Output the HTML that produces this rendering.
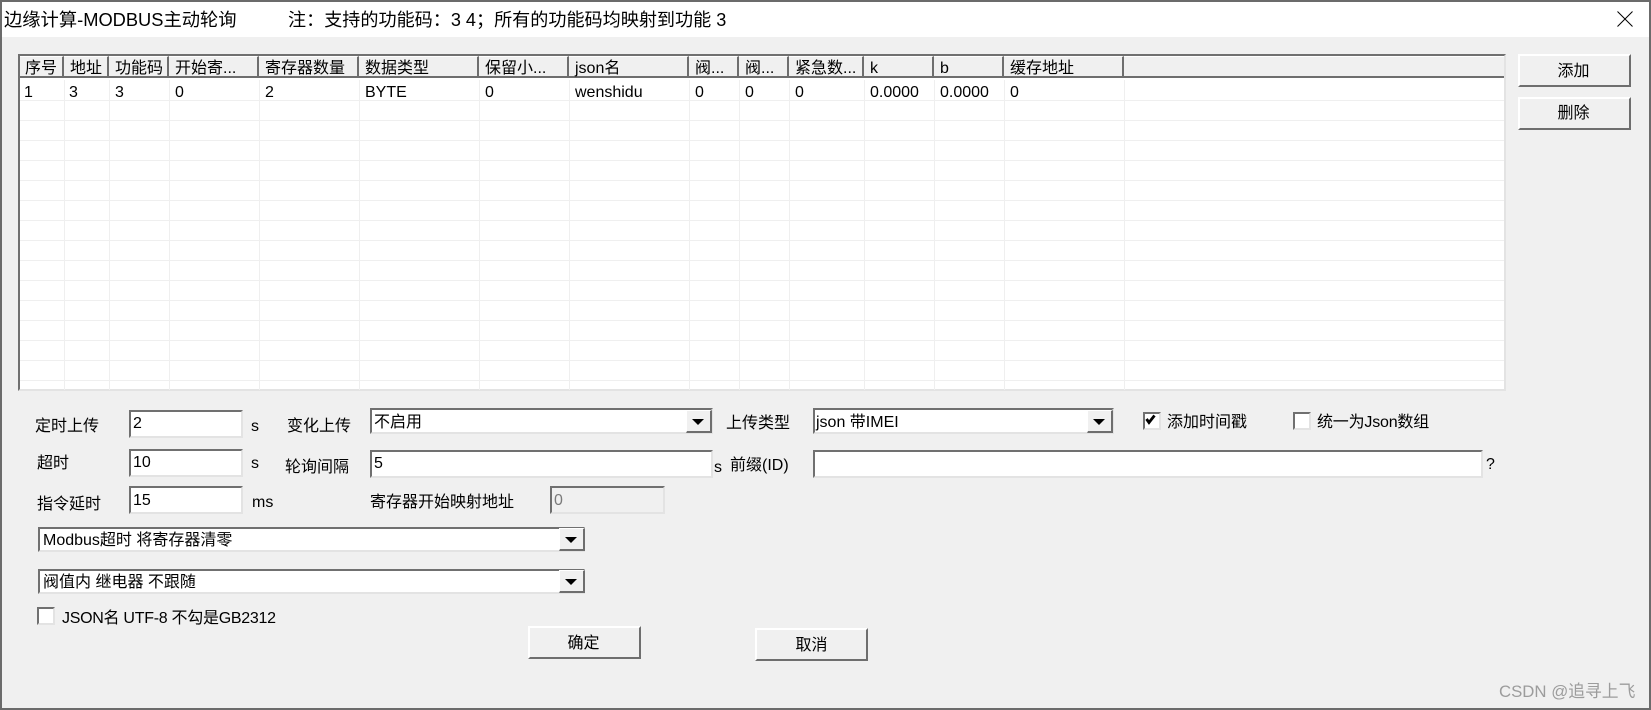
<!DOCTYPE html>
<html lang="zh">
<head>
<meta charset="utf-8">
<title>边缘计算-MODBUS主动轮询</title>
<style>
html,body{margin:0;padding:0;width:1651px;height:710px;overflow:hidden;background:#f0f0f0}
body{position:relative;font-family:"Liberation Sans","WenQuanYi Zen Hei","Noto Sans CJK SC",sans-serif;font-size:16px;color:#000}
div{position:absolute;box-sizing:border-box}
.t{white-space:nowrap;line-height:20px;height:20px;margin-top:2px}
.ttl{font-size:18.3px;line-height:24px;height:24px;white-space:nowrap}
.sunk{background:#fff;border-top:2px solid #707070;border-left:2px solid #707070;border-right:2px solid #e3e3e3;border-bottom:2px solid #e3e3e3}
.btn{background:#f0f0f0;border-top:2px solid #fff;border-left:2px solid #fff;border-right:2px solid #6e6e6e;border-bottom:2px solid #6e6e6e;text-align:center;line-height:31px;outline:0}
.ab{background:#f0f0f0;border-top:1px solid #fff;border-left:1px solid #fff;border-right:2px solid #6e6e6e;border-bottom:2px solid #6e6e6e}
.ar{width:0;height:0;border-left:6px solid transparent;border-right:6px solid transparent;border-top:6px solid #000}
.hd{top:56px;height:22px;background:#f0f0f0;border-right:2px solid #6e6e6e;border-top:1px solid #fff;border-bottom:2px solid #6e6e6e}
.hl{top:59px;white-space:nowrap;line-height:20px;height:20px}
.cl{top:80px;width:1px;height:310px;background:#efefef}
.rl{left:20px;width:1484px;height:1px;background:#efefef}
.c{top:83px;white-space:nowrap;line-height:20px;height:20px}
</style>
</head>
<body>
<div style="left:0;top:0;width:1651px;height:37px;background:#fff"></div>
<div style="left:0;top:0;width:1651px;height:2px;background:#6b6b6b"></div>
<div style="left:0;top:708px;width:1651px;height:2px;background:#6b6b6b"></div>
<div style="left:0;top:0;width:2px;height:710px;background:#6b6b6b"></div>
<div style="left:1649px;top:0;width:2px;height:710px;background:#6b6b6b"></div>

<div class="ttl" style="left:4px;top:8px">边缘计算-MODBUS主动轮询</div>
<div class="ttl" style="left:288px;top:8px;font-size:18.1px">注：支持的功能码：3 4；所有的功能码均映射到功能 3</div>
<svg style="position:absolute;left:1617px;top:11px" width="16" height="16" viewBox="0 0 16 16"><path d="M0.5 0.5L15.5 15.5M15.5 0.5L0.5 15.5" stroke="#000" stroke-width="1" fill="none"/></svg>

<!-- grid -->
<div class="sunk" style="left:18px;top:54px;width:1488px;height:337px"></div>
<div class="rl" style="top:100px"></div><div class="rl" style="top:120px"></div><div class="rl" style="top:140px"></div><div class="rl" style="top:160px"></div><div class="rl" style="top:180px"></div><div class="rl" style="top:200px"></div><div class="rl" style="top:220px"></div><div class="rl" style="top:240px"></div><div class="rl" style="top:260px"></div><div class="rl" style="top:280px"></div><div class="rl" style="top:300px"></div><div class="rl" style="top:320px"></div><div class="rl" style="top:340px"></div><div class="rl" style="top:360px"></div><div class="rl" style="top:380px"></div>
<div class="cl" style="left:64px"></div><div class="cl" style="left:109px"></div><div class="cl" style="left:169px"></div><div class="cl" style="left:259px"></div><div class="cl" style="left:359px"></div><div class="cl" style="left:479px"></div><div class="cl" style="left:569px"></div><div class="cl" style="left:689px"></div><div class="cl" style="left:739px"></div><div class="cl" style="left:789px"></div><div class="cl" style="left:864px"></div><div class="cl" style="left:934px"></div><div class="cl" style="left:1004px"></div><div class="cl" style="left:1124px"></div>

<div class="hd" style="left:20px;width:44px"></div>
<div class="hd" style="left:64px;width:45px"></div>
<div class="hd" style="left:109px;width:60px"></div>
<div class="hd" style="left:169px;width:90px"></div>
<div class="hd" style="left:259px;width:100px"></div>
<div class="hd" style="left:359px;width:120px"></div>
<div class="hd" style="left:479px;width:90px"></div>
<div class="hd" style="left:569px;width:120px"></div>
<div class="hd" style="left:689px;width:50px"></div>
<div class="hd" style="left:739px;width:50px"></div>
<div class="hd" style="left:789px;width:75px"></div>
<div class="hd" style="left:864px;width:70px"></div>
<div class="hd" style="left:934px;width:70px"></div>
<div class="hd" style="left:1004px;width:120px"></div>
<div class="hd" style="left:1124px;width:380px;border-right:0"></div>

<div class="hl" style="left:25px">序号</div>
<div class="hl" style="left:70px">地址</div>
<div class="hl" style="left:115px">功能码</div>
<div class="hl" style="left:175px">开始寄...</div>
<div class="hl" style="left:265px">寄存器数量</div>
<div class="hl" style="left:365px">数据类型</div>
<div class="hl" style="left:485px">保留小...</div>
<div class="hl" style="left:575px">json名</div>
<div class="hl" style="left:695px">阀...</div>
<div class="hl" style="left:745px">阀...</div>
<div class="hl" style="left:795px">紧急数...</div>
<div class="hl" style="left:870px">k</div>
<div class="hl" style="left:940px">b</div>
<div class="hl" style="left:1010px">缓存地址</div>

<div class="c" style="left:24px">1</div>
<div class="c" style="left:69px">3</div>
<div class="c" style="left:115px">3</div>
<div class="c" style="left:175px">0</div>
<div class="c" style="left:265px">2</div>
<div class="c" style="left:365px">BYTE</div>
<div class="c" style="left:485px">0</div>
<div class="c" style="left:575px">wenshidu</div>
<div class="c" style="left:695px">0</div>
<div class="c" style="left:745px">0</div>
<div class="c" style="left:795px">0</div>
<div class="c" style="left:870px">0.0000</div>
<div class="c" style="left:940px">0.0000</div>
<div class="c" style="left:1010px">0</div>

<div class="btn" style="left:1518px;top:54px;width:113px;height:33px;padding-right:2px">添加</div>
<div class="btn" style="left:1518px;top:97px;width:113px;height:33px;padding-right:2px;line-height:30px">删除</div>

<!-- row 1 -->
<div class="t" style="left:35px;top:415px">定时上传</div>
<div class="sunk" style="left:129px;top:410px;width:114px;height:28px"></div>
<div class="t" style="left:133px;top:412px">2</div>
<div class="t" style="left:251px;top:415px">s</div>
<div class="t" style="left:287px;top:415px">变化上传</div>
<div class="sunk" style="left:370px;top:408px;width:343px;height:26px"></div>
<div class="t" style="left:374px;top:411px">不启用</div>
<div class="ab" style="left:686px;top:410px;width:26px;height:23px"></div>
<div class="ar" style="left:692px;top:419px"></div>
<div class="t" style="left:726px;top:412px">上传类型</div>
<div class="sunk" style="left:813px;top:408px;width:301px;height:26px"></div>
<div class="t" style="left:816px;top:411px">json 带IMEI</div>
<div class="ab" style="left:1087px;top:410px;width:26px;height:23px"></div>
<div class="ar" style="left:1093px;top:419px"></div>
<div class="sunk" style="left:1143px;top:412px;width:18px;height:18px"></div>
<svg style="position:absolute;left:1145px;top:414px" width="12" height="12" viewBox="0 0 12 12"><path d="M1.5 5L4 8.5L9.5 1.5" stroke="#000" stroke-width="2.8" fill="none"/></svg>
<div class="t" style="left:1167px;top:411px">添加时间戳</div>
<div class="sunk" style="left:1293px;top:412px;width:18px;height:18px"></div>
<div class="t" style="left:1317px;top:411px;letter-spacing:-.2px">统一为Json数组</div>

<!-- row 2 -->
<div class="t" style="left:37px;top:452px">超时</div>
<div class="sunk" style="left:129px;top:449px;width:114px;height:28px"></div>
<div class="t" style="left:133px;top:451px">10</div>
<div class="t" style="left:251px;top:452px">s</div>
<div class="t" style="left:285px;top:456px">轮询间隔</div>
<div class="sunk" style="left:370px;top:450px;width:343px;height:28px"></div>
<div class="t" style="left:374px;top:452px">5</div>
<div class="t" style="left:714px;top:456px">s</div>
<div class="t" style="left:730px;top:454px">前缀(ID)</div>
<div class="sunk" style="left:813px;top:450px;width:670px;height:28px"></div>
<div class="t" style="left:1486px;top:453px">?</div>

<!-- row 3 -->
<div class="t" style="left:37px;top:493px">指令延时</div>
<div class="sunk" style="left:129px;top:486px;width:114px;height:28px"></div>
<div class="t" style="left:133px;top:489px">15</div>
<div class="t" style="left:252px;top:491px">ms</div>
<div class="t" style="left:370px;top:491px">寄存器开始映射地址</div>
<div class="sunk" style="left:550px;top:486px;width:115px;height:28px;background:#f0f0f0"></div>
<div class="t" style="left:554px;top:489px;color:#7a7a7a">0</div>

<!-- combos -->
<div class="sunk" style="left:38px;top:527px;width:547px;height:25px"></div>
<div class="t" style="left:43px;top:529px">Modbus超时 将寄存器清零</div>
<div class="ab" style="left:559px;top:528px;width:26px;height:23px"></div>
<div class="ar" style="left:565px;top:537px"></div>
<div class="sunk" style="left:38px;top:569px;width:547px;height:25px"></div>
<div class="t" style="left:43px;top:571px">阀值内 继电器 不跟随</div>
<div class="ab" style="left:559px;top:570px;width:26px;height:23px"></div>
<div class="ar" style="left:565px;top:579px"></div>

<div class="sunk" style="left:37px;top:607px;width:18px;height:18px"></div>
<div class="t" style="left:62px;top:607px;letter-spacing:-.28px">JSON名 UTF-8 不勾是GB2312</div>

<div class="btn" style="left:528px;top:626px;width:113px;height:33px;padding-right:2px">确定</div>
<div class="btn" style="left:755px;top:628px;width:113px;height:33px">取消</div>

<div class="t" style="left:1499px;top:680px;color:#9c9c9c;font-size:16.8px">CSDN @追寻上飞</div>
</body>
</html>
